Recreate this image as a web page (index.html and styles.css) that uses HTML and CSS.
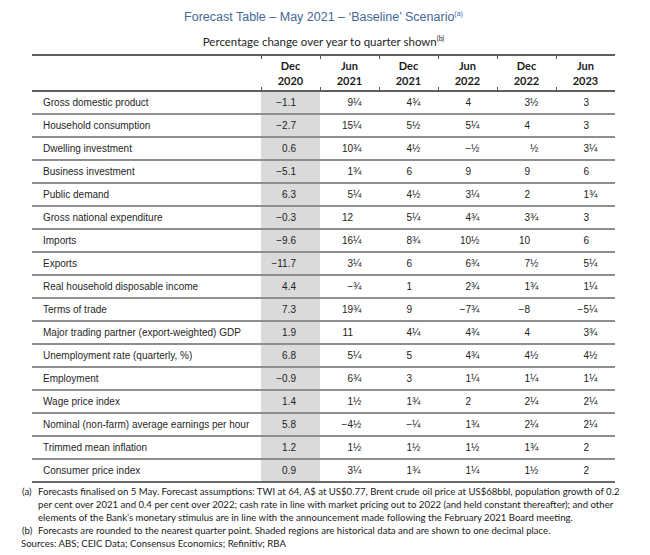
FILE: index.html
```html
<!DOCTYPE html>
<html>
<head>
<meta charset="utf-8">
<link rel="stylesheet" href="styles.css">
</head>
<body>
<div class="page">
  <div class="head">
    <h1 class="title">Forecast Table – May 2021 – ‘Baseline’ Scenario<sup>(a)</sup></h1>
    <p class="subtitle">Percentage change over year to quarter shown<sup>(b)</sup></p>
  </div>
  <table class="ft">
    <thead>
      <tr>
        <th class="lab"></th>
        <th>Dec<br>2020</th>
        <th>Jun<br>2021</th>
        <th>Dec<br>2021</th>
        <th>Jun<br>2022</th>
        <th>Dec<br>2022</th>
        <th>Jun<br>2023</th>
      </tr>
    </thead>
    <tbody>
      <tr><td class="lab">Gross domestic product</td><td class="hist">−1.1</td><td class="n"><span class="i">9</span>¼</td><td class="n"><span class="i">4</span>¾</td><td class="n"><span class="i">4</span></td><td class="n"><span class="i">3</span>½</td><td class="n"><span class="i">3</span></td></tr>
      <tr><td class="lab">Household consumption</td><td class="hist">−2.7</td><td class="n"><span class="i">15</span>¼</td><td class="n"><span class="i">5</span>½</td><td class="n"><span class="i">5</span>¼</td><td class="n"><span class="i">4</span></td><td class="n"><span class="i">3</span></td></tr>
      <tr><td class="lab">Dwelling investment</td><td class="hist">0.6</td><td class="n"><span class="i">10</span>¾</td><td class="n"><span class="i">4</span>½</td><td class="n"><span class="i">−</span>½</td><td class="n"><span class="i"></span>½</td><td class="n"><span class="i">3</span>¼</td></tr>
      <tr><td class="lab">Business investment</td><td class="hist">−5.1</td><td class="n"><span class="i">1</span>¾</td><td class="n"><span class="i">6</span></td><td class="n"><span class="i">9</span></td><td class="n"><span class="i">9</span></td><td class="n"><span class="i">6</span></td></tr>
      <tr><td class="lab">Public demand</td><td class="hist">6.3</td><td class="n"><span class="i">5</span>¼</td><td class="n"><span class="i">4</span>½</td><td class="n"><span class="i">3</span>¼</td><td class="n"><span class="i">2</span></td><td class="n"><span class="i">1</span>¾</td></tr>
      <tr><td class="lab">Gross national expenditure</td><td class="hist">−0.3</td><td class="n"><span class="i">12</span></td><td class="n"><span class="i">5</span>¼</td><td class="n"><span class="i">4</span>¾</td><td class="n"><span class="i">3</span>¾</td><td class="n"><span class="i">3</span></td></tr>
      <tr><td class="lab">Imports</td><td class="hist">−9.6</td><td class="n"><span class="i">16</span>¼</td><td class="n"><span class="i">8</span>¾</td><td class="n"><span class="i">10</span>½</td><td class="n"><span class="i">10</span></td><td class="n"><span class="i">6</span></td></tr>
      <tr><td class="lab">Exports</td><td class="hist">−11.7</td><td class="n"><span class="i">3</span>¼</td><td class="n"><span class="i">6</span></td><td class="n"><span class="i">6</span>¾</td><td class="n"><span class="i">7</span>½</td><td class="n"><span class="i">5</span>¼</td></tr>
      <tr><td class="lab">Real household disposable income</td><td class="hist">4.4</td><td class="n"><span class="i">−</span>¾</td><td class="n"><span class="i">1</span></td><td class="n"><span class="i">2</span>¾</td><td class="n"><span class="i">1</span>¾</td><td class="n"><span class="i">1</span>¼</td></tr>
      <tr><td class="lab">Terms of trade</td><td class="hist">7.3</td><td class="n"><span class="i">19</span>¾</td><td class="n"><span class="i">9</span></td><td class="n"><span class="i">−7</span>¾</td><td class="n"><span class="i">−8</span></td><td class="n"><span class="i">−5</span>¼</td></tr>
      <tr><td class="lab">Major trading partner (export-weighted) GDP</td><td class="hist">1.9</td><td class="n"><span class="i">11</span></td><td class="n"><span class="i">4</span>¼</td><td class="n"><span class="i">4</span>¾</td><td class="n"><span class="i">4</span></td><td class="n"><span class="i">3</span>¾</td></tr>
      <tr><td class="lab">Unemployment rate (quarterly, %)</td><td class="hist">6.8</td><td class="n"><span class="i">5</span>¼</td><td class="n"><span class="i">5</span></td><td class="n"><span class="i">4</span>¾</td><td class="n"><span class="i">4</span>½</td><td class="n"><span class="i">4</span>½</td></tr>
      <tr><td class="lab">Employment</td><td class="hist">−0.9</td><td class="n"><span class="i">6</span>¾</td><td class="n"><span class="i">3</span></td><td class="n"><span class="i">1</span>¼</td><td class="n"><span class="i">1</span>¼</td><td class="n"><span class="i">1</span>¼</td></tr>
      <tr><td class="lab">Wage price index</td><td class="hist">1.4</td><td class="n"><span class="i">1</span>½</td><td class="n"><span class="i">1</span>¾</td><td class="n"><span class="i">2</span></td><td class="n"><span class="i">2</span>¼</td><td class="n"><span class="i">2</span>¼</td></tr>
      <tr><td class="lab">Nominal (non-farm) average earnings per hour</td><td class="hist">5.8</td><td class="n"><span class="i">−4</span>½</td><td class="n"><span class="i">−</span>¼</td><td class="n"><span class="i">1</span>¾</td><td class="n"><span class="i">2</span>¼</td><td class="n"><span class="i">2</span>¼</td></tr>
      <tr><td class="lab">Trimmed mean inflation</td><td class="hist">1.2</td><td class="n"><span class="i">1</span>½</td><td class="n"><span class="i">1</span>½</td><td class="n"><span class="i">1</span>½</td><td class="n"><span class="i">1</span>¾</td><td class="n"><span class="i">2</span></td></tr>
      <tr class="last"><td class="lab">Consumer price index</td><td class="hist">0.9</td><td class="n"><span class="i">3</span>¼</td><td class="n"><span class="i">1</span>¾</td><td class="n"><span class="i">1</span>¼</td><td class="n"><span class="i">1</span>½</td><td class="n"><span class="i">2</span></td></tr>
    </tbody>
  </table>
  <div class="notes">
    <div class="note"><span class="mark">(a)</span><span class="ntext">Forecasts finalised on 5 May. Forecast assumptions: TWI at 64, A$ at US$0.77, Brent crude oil price at US$68bbl, population growth of 0.2<br>per cent over 2021 and 0.4 per cent over 2022; cash rate in line with market pricing out to 2022 (and held constant thereafter); and other<br>elements of the Bank’s monetary stimulus are in line with the announcement made following the February 2021 Board meeting.</span></div>
    <div class="note"><span class="mark">(b)</span><span class="ntext">Forecasts are rounded to the nearest quarter point. Shaded regions are historical data and are shown to one decimal place.</span></div>
    <div class="src">Sources: ABS; CEIC Data; Consensus Economics; Refinitiv; RBA</div>
  </div>
</div>
</body>
</html>
```
FILE: styles.css
```css
html, body {
  margin: 0;
  padding: 0;
  background: #ffffff;
}
.page {
  width: 650px;
  height: 555px;
  padding-top: 9px;
  box-sizing: border-box;
}
.head {
  width: 583px;
  margin-left: 32px;
  text-align: center;
}
.title {
  margin: 0;
  font-family: "Liberation Sans", Arial, sans-serif;
  font-weight: normal;
  font-size: 12.5px;
  line-height: 16px;
  color: #45689a;
}
.title sup, .subtitle sup {
  font-size: 7px;
  line-height: 0;
  vertical-align: 5px;
}
.subtitle {
  margin: 9px 0 0 0;
  font-family: Lato, "Open Sans", sans-serif;
  font-size: 11.5px;
  line-height: 15px;
  color: #1e1e1e;
}
.ft {
  margin: 5px 0 0 32px;
  width: 583px;
  border-collapse: separate;
  border-spacing: 0;
  table-layout: fixed;
  border-top: 2px solid #5f5f5f;
}
.ft th {
  font-family: Lato, "Open Sans", sans-serif;
  font-weight: bold;
  font-size: 11px;
  line-height: 15px;
  color: #1b1b1b;
  text-align: center;
  width: 59px;
  padding: 2px 0 2px 0;
  border-bottom: 2px solid #5f5f5f;
  background:
    linear-gradient(#555, #555) left top / 1px 3px no-repeat,
    linear-gradient(#555, #555) left bottom / 1px 3px no-repeat;
}
.ft th.lab {
  width: 229px;
  background: none;
}
.ft td {
  font-family: "Liberation Sans", Arial, sans-serif;
  font-size: 10px;
  line-height: 21px;
  color: #222;
  padding: 0;
  border-bottom: 2px solid #8e8e8e;
  white-space: nowrap;
}
.ft td.lab {
  padding-left: 11px;
  color: #1f1f1f;
}
.ft td.hist {
  background: #dadada;
  text-align: right;
  padding-right: 24px;
}
.ft td.n {
  padding-left: 13px;
}
.ft td.n .i {
  display: inline-block;
  width: 20px;
  text-align: right;
}
.ft tr.last td {
  border-bottom: 2px solid #6a6a6a;
}
.notes {
  margin: 2px 0 0 22px;
  font-family: Lato, "Open Sans", sans-serif;
  font-size: 9.6px;
  line-height: 13px;
  color: #1a1a1a;
}
.note {
  display: flex;
}
.mark {
  width: 16px;
  flex: none;
}
.ntext {
  white-space: nowrap;
}
.src {
  margin-left: -1px;
}
```
